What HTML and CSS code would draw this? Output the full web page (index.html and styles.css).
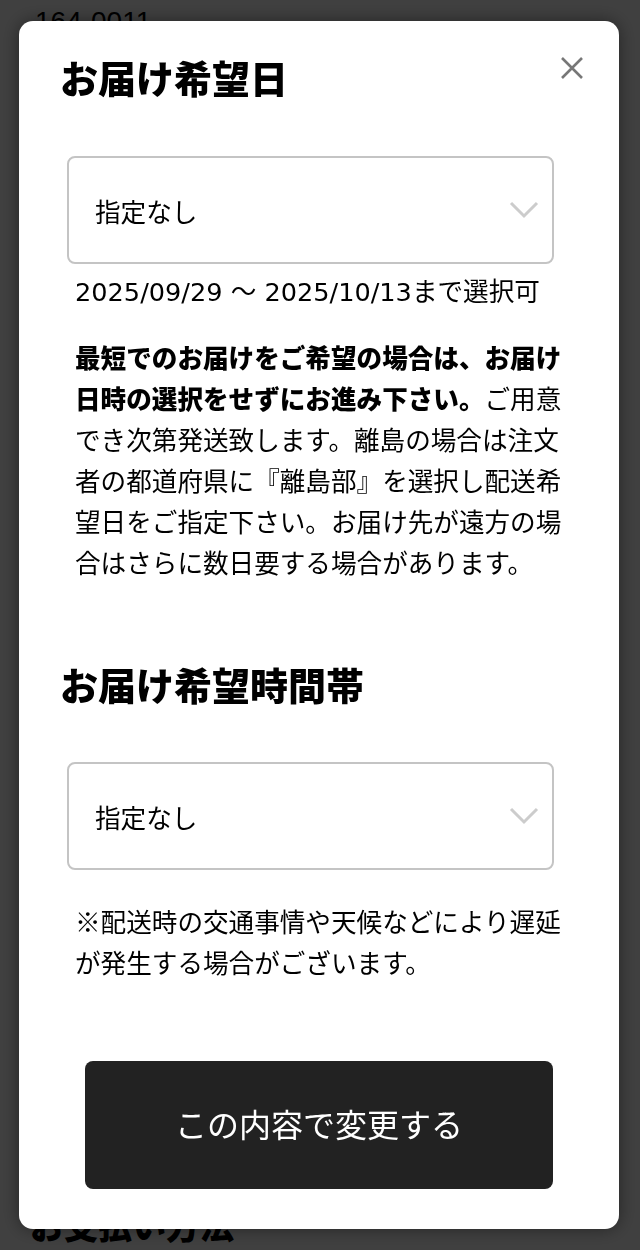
FILE: index.html
```html
<!DOCTYPE html>
<html lang="ja">
<head>
    <meta charset="UTF-8">
    <meta name="viewport" content="width=device-width, initial-scale=1.0">
    <title>お届け希望日</title>
    <link rel="stylesheet" href="styles.css">
</head>
<body>
    <!-- Page behind the modal -->
    <div class="page">
        <p class="zip">164-0011</p>
        <h3 class="page-heading">お支払い方法</h3>
    </div>

    <div class="overlay">
        <div class="modal">
            <button class="close" aria-label="閉じる">
                <svg width="24" height="24" viewBox="0 0 24 24">
                    <path d="M2 2 L22 22 M22 2 L2 22" stroke="#777" stroke-width="2.6" fill="none"/>
                </svg>
            </button>

            <h2 class="modal-title">お届け希望日</h2>
            <div class="select">
                <span>指定なし</span>
                <svg class="chevron" width="30" height="18" viewBox="0 0 30 18">
                    <polyline points="2,2 15,15 28,2" stroke="#ccc" stroke-width="3" fill="none"/>
                </svg>
            </div>
            <p class="range">2025/09/29 ～ 2025/10/13まで選択可</p>
            <p class="note">
                <strong>最短でのお届けをご希望の場合は、お届け日時の選択をせずにお進み下さい。</strong>ご用意でき次第発送致します。離島の場合は注文者の都道府県に『離島部』を選択し配送希望日をご指定下さい。お届け先が遠方の場合はさらに数日要する場合があります。
            </p>

            <h2 class="modal-title second">お届け希望時間帯</h2>
            <div class="select select-time">
                <span>指定なし</span>
                <svg class="chevron" width="30" height="18" viewBox="0 0 30 18">
                    <polyline points="2,2 15,15 28,2" stroke="#ccc" stroke-width="3" fill="none"/>
                </svg>
            </div>
            <p class="note note-time">※配送時の交通事情や天候などにより遅延が発生する場合がございます。</p>

            <button class="submit">この内容で変更する</button>
        </div>
    </div>
</body>
</html>
```

FILE: styles.css
```css
* {
    margin: 0;
    padding: 0;
    box-sizing: border-box;
}

body {
    font-family: "Noto Sans CJK JP", sans-serif;
    background-color: #fff;
    color: #000;
}

.page {
    height: 1250px;
    overflow: hidden;
    display: flex;
    flex-direction: column;
    justify-content: space-between;
    padding: 6px 30px 0;
}

.zip {
    font-family: "Liberation Sans", "Noto Sans CJK JP", sans-serif;
    font-size: 28px;
    line-height: 32px;
    padding-left: 5px;
}

.page-heading {
    font-size: 34px;
    line-height: 40px;
    font-weight: 900;
    margin-bottom: 5px;
}

.overlay {
    position: fixed;
    inset: 0;
    background-color: rgba(0, 0, 0, 0.75);
}

.modal {
    position: relative;
    width: 600px;
    margin: 21px 0 0 19px;
    padding: 28px 0 40px;
    background-color: #fff;
    border-radius: 14px;
    box-shadow: 0 0 18px rgba(0, 0, 0, 0.45);
}

.close {
    position: absolute;
    top: 35px;
    right: 35px;
    width: 24px;
    height: 24px;
    border: none;
    background: none;
    cursor: pointer;
}

.close svg {
    display: block;
}

.modal-title {
    margin-left: 41px;
    font-size: 38px;
    line-height: 56px;
    font-weight: 900;
}

.modal-title.second {
    margin-top: 74px;
}

.select {
    display: flex;
    align-items: center;
    justify-content: space-between;
    width: 487px;
    height: 108px;
    margin: 51px 0 0 48px;
    padding: 0 13px 0 26px;
    border: 2px solid #c4c4c4;
    border-radius: 8px;
    font-size: 25.6px;
}

.select-time {
    margin-top: 50px;
}

.range {
    margin: 8px 0 0 56px;
    font-family: "DejaVu Sans", "Noto Sans CJK JP", sans-serif;
    font-size: 25.6px;
    line-height: 41px;
}

.note {
    width: 492px;
    margin: 23px 0 0 56px;
    font-size: 25.6px;
    line-height: 41px;
}

.note strong {
    font-weight: 900;
}

.note-time {
    margin-top: 30px;
}

.submit {
    display: block;
    width: 468px;
    height: 128px;
    margin: 79px 0 0 66px;
    padding-bottom: 5px;
    border: none;
    border-radius: 8px;
    background-color: #222;
    color: #fff;
    font-family: inherit;
    font-size: 32px;
    cursor: pointer;
}
```
